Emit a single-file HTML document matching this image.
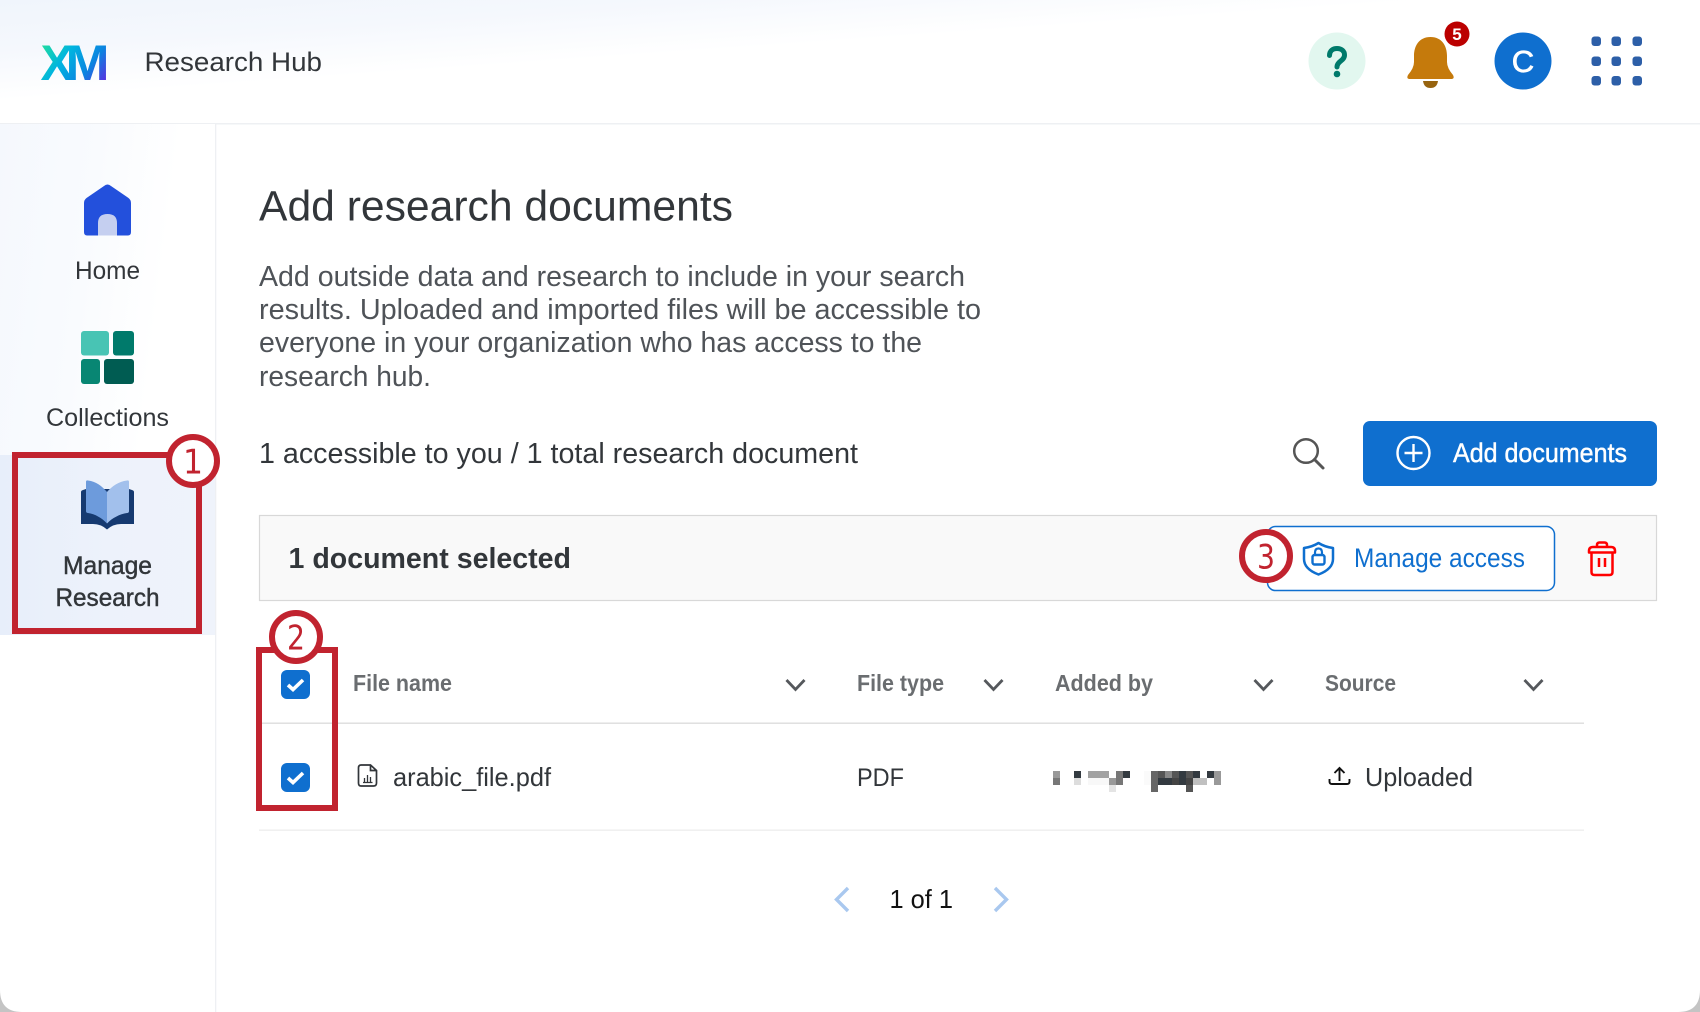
<!DOCTYPE html>
<html lang="en">
<head>
<meta charset="utf-8">
<title>Research Hub</title>
<style>
html,body{margin:0;padding:0;background:#fff;width:1700px;height:1012px;overflow:hidden}
svg{display:block}
text{font-family:"Liberation Sans",Arial,sans-serif}
.t{fill:#32363a}
.p{fill:#4f5358;font-size:29px}
.th{fill:#6a6d70;font-size:23px;font-weight:bold}
.med{stroke-width:.45px}
.num{fill:#c1232f;font-size:34px;font-family:"DejaVu Sans",sans-serif}
</style>
</head>
<body>
<svg width="1700" height="1012" viewBox="0 0 1700 1012" xmlns="http://www.w3.org/2000/svg">
<defs>
<linearGradient id="hd" gradientUnits="userSpaceOnUse" x1="0" y1="0" x2="7" y2="100">
<stop offset="0" stop-color="#f0f5fc"/><stop offset=".5" stop-color="#f5f8fd"/><stop offset="1" stop-color="#fff"/>
</linearGradient>
<linearGradient id="sb" x1="0" y1="0" x2="1" y2=".25">
<stop offset="0" stop-color="#f5f8fd"/><stop offset=".45" stop-color="#f9fbfe"/><stop offset=".8" stop-color="#fff"/>
</linearGradient>
<linearGradient id="sel" x1="0" y1="0" x2="1" y2="0">
<stop offset="0" stop-color="#e7eefa"/><stop offset=".5" stop-color="#edf2fb"/><stop offset="1" stop-color="#eff3fb"/>
</linearGradient>
<linearGradient id="xm" gradientUnits="userSpaceOnUse" x1="46" y1="40" x2="104" y2="84">
<stop offset="0" stop-color="#1fdca0"/><stop offset=".35" stop-color="#00b4e0"/><stop offset=".7" stop-color="#0b84e0"/><stop offset="1" stop-color="#5a2ee0"/>
</linearGradient>
</defs>

<rect width="1700" height="1012" fill="#fff"/>
<!-- header -->
<rect width="1700" height="123" fill="url(#hd)"/>
<rect x="0" y="123" width="1700" height="1.5" fill="#eef0f3"/>
<!-- sidebar -->
<rect x="0" y="124" width="215" height="420" fill="url(#sb)"/>
<rect x="215" y="124" width="1.3" height="888" fill="#eef0f3"/>
<rect x="0" y="455" width="215" height="180" fill="url(#sel)"/>

<!-- logo -->
<text x="40.5" y="80" font-size="50" font-weight="bold" fill="url(#xm)" textLength="33" lengthAdjust="spacingAndGlyphs">X</text>
<text x="65.5" y="80" font-size="50" font-weight="bold" fill="url(#xm)" textLength="44" lengthAdjust="spacingAndGlyphs">M</text>
<text x="144.5" y="71" font-size="27" class="t" textLength="177.5" lengthAdjust="spacingAndGlyphs">Research Hub</text>

<!-- help -->
<circle cx="1337" cy="61" r="28.5" fill="#e2f7ef"/>
<path d="M1329.5 55.5 C1329.5 50.5 1333 48.5 1337 48.5 C1341.5 48.5 1344.5 51 1344.5 55 C1344.5 61 1337 61 1337 67" fill="none" stroke="#007a6b" stroke-width="5" stroke-linecap="round"/>
<circle cx="1337" cy="74" r="3.3" fill="#007a6b"/>

<!-- bell -->
<path d="M1430.5 37 C1442 37 1447 46 1447 56 V62 Q1447 68 1453 75 Q1455 79 1451 79 H1410 Q1406 79 1408 75 Q1414 68 1414 62 V56 C1414 46 1419 37 1430.5 37 Z" fill="#c57a0c"/>
<path d="M1423 81 H1438 Q1437 88 1430.5 88 Q1424 88 1423 81 Z" fill="#97640f"/>
<circle cx="1457" cy="34" r="12.5" fill="#bb0000"/>
<text x="1457" y="40" font-size="17" font-weight="bold" fill="#fff" text-anchor="middle">5</text>

<!-- avatar -->
<circle cx="1523" cy="61" r="28.5" fill="#0f6fcf"/>
<text x="1523" y="72" font-size="31" fill="#fff" stroke="#fff" stroke-width=".7" text-anchor="middle">C</text>

<!-- apps -->
<g fill="#2d5fa8">
<rect x="1591.5" y="36.5" width="9.5" height="9.5" rx="3"/><rect x="1611.5" y="36.5" width="9.5" height="9.5" rx="3"/><rect x="1632.5" y="36.5" width="9.5" height="9.5" rx="3"/>
<rect x="1591.5" y="56.5" width="9.5" height="9.5" rx="3"/><rect x="1611.5" y="56.5" width="9.5" height="9.5" rx="3"/><rect x="1632.5" y="56.5" width="9.5" height="9.5" rx="3"/>
<rect x="1591.5" y="76" width="9.5" height="9.5" rx="3"/><rect x="1611.5" y="76" width="9.5" height="9.5" rx="3"/><rect x="1632.5" y="76" width="9.5" height="9.5" rx="3"/>
</g>

<!-- home -->
<path d="M104 186 Q107.5 183 111 186 L128.5 198 Q131 200 131 203 V232 Q131 235.5 128 235.5 H87 Q84 235.5 84 232 V203 Q84 200 86.5 198 Z" fill="#2350dc"/>
<path d="M98 235.5 V223 Q98 214 107.5 214 Q117 214 117 223 V235.5 Z" fill="#c5cff0"/>
<text x="75" y="279" font-size="25" class="t" textLength="65" lengthAdjust="spacingAndGlyphs">Home</text>

<!-- collections -->
<rect x="81" y="331" width="28" height="24.5" rx="3" fill="#48c4b4"/>
<rect x="113" y="331" width="21" height="24.5" rx="3" fill="#007a6b"/>
<rect x="81" y="359" width="19" height="25" rx="3" fill="#088673"/>
<rect x="104" y="359" width="30" height="25" rx="3" fill="#005c52"/>
<text x="46" y="426" font-size="25" class="t" textLength="123" lengthAdjust="spacingAndGlyphs">Collections</text>

<!-- manage research -->
<path d="M83 490 L86 489 H129 L132 490 Q134 490.5 134 492 V524 H121 Q113 524 107 529.5 Q101 524 93 524 H81 V492 Q81 490.5 83 490 Z" fill="#163a70"/>
<path d="M86 482 Q86 480 88 480.5 C96 481.5 102 486 107 492 V523.5 C102 518 95 514 88 513 Q86 513 86 511 Z" fill="#6d9bdc"/>
<path d="M129 482 Q129 480 127 480.5 C119 481.5 112 486 107 492 V523.5 C112 518 120 514 127 513 Q129 513 129 511 Z" fill="#a2c0ec"/>
<text x="63" y="574" font-size="25" class="t med" stroke="#32363a" textLength="89" lengthAdjust="spacingAndGlyphs">Manage</text>
<text x="55.5" y="606" font-size="25" class="t med" stroke="#32363a" textLength="104" lengthAdjust="spacingAndGlyphs">Research</text>

<!-- main copy -->
<text x="259" y="220.5" font-size="43" class="t" textLength="474" lengthAdjust="spacingAndGlyphs">Add research documents</text>
<text x="259" y="286" class="p" textLength="706" lengthAdjust="spacingAndGlyphs">Add outside data and research to include in your search</text>
<text x="259" y="319" class="p" textLength="722" lengthAdjust="spacingAndGlyphs">results. Uploaded and imported files will be accessible to</text>
<text x="259" y="352" class="p" textLength="663" lengthAdjust="spacingAndGlyphs">everyone in your organization who has access to the</text>
<text x="259" y="386" class="p" textLength="172" lengthAdjust="spacingAndGlyphs">research hub.</text>
<text x="259" y="463" font-size="29" class="t" textLength="599" lengthAdjust="spacingAndGlyphs">1 accessible to you / 1 total research document</text>

<!-- search -->
<circle cx="1306" cy="451" r="11.8" fill="none" stroke="#555" stroke-width="2.5"/>
<path d="M1314.5 459.5 L1323 468" stroke="#555" stroke-width="3" stroke-linecap="round"/>

<!-- add -->
<rect x="1363" y="421" width="294" height="65" rx="7" fill="#0f6fcf"/>
<circle cx="1413.5" cy="453" r="16" fill="none" stroke="#fff" stroke-width="2.4"/>
<path d="M1413.5 444 V462 M1404.5 453 H1422.5" stroke="#fff" stroke-width="2.4"/>
<text x="1453" y="462" font-size="26.5" fill="#fff" stroke="#fff" class="med" textLength="174" lengthAdjust="spacingAndGlyphs">Add documents</text>

<!-- selected bar -->
<rect x="259.5" y="515.5" width="1397" height="85" fill="#f9f9f9" stroke="#d8d8d8" stroke-width="1.2"/>
<text x="288.5" y="568" font-size="29" font-weight="bold" class="t" textLength="282.5" lengthAdjust="spacingAndGlyphs">1 document selected</text>
<rect x="1267.5" y="526.5" width="287" height="64" rx="8" fill="#fff" stroke="#0f6fcf" stroke-width="1.5"/>
<path d="M1304 548 Q1312 547 1318.5 543 Q1325 547 1333 548 V559 Q1333 569 1318.5 574.5 Q1304 569 1304 559 Z" fill="none" stroke="#0f6fcf" stroke-width="2.5" stroke-linejoin="round"/>
<rect x="1312.5" y="555" width="12" height="9.5" rx="2" fill="none" stroke="#0f6fcf" stroke-width="2.4"/>
<path d="M1315 555 V552.5 Q1315 548.5 1318.5 548.5 Q1322 548.5 1322 552.5 V555" fill="none" stroke="#0f6fcf" stroke-width="2.2"/>
<text x="1354" y="567" font-size="26.5" fill="#0f6fcf" textLength="171" lengthAdjust="spacingAndGlyphs">Manage access</text>

<!-- trash -->
<path d="M1589 551 Q1589 547 1593 547 H1611 Q1615 547 1615 551 V552.5 H1589 Z M1597 547 V545 Q1597 542.5 1599.5 542.5 H1604.5 Q1607 542.5 1607 545 V547 M1591.5 552.5 V572 Q1591.5 575 1594.5 575 H1609.5 Q1612.5 575 1612.5 572 V552.5 M1599 558 V567 M1605 558 V567" fill="none" stroke="#f00" stroke-width="2.5" stroke-linejoin="round"/>

<!-- table headers -->
<text x="353" y="691" class="th" textLength="99" lengthAdjust="spacingAndGlyphs">File name</text>
<text x="857" y="691" class="th" textLength="87" lengthAdjust="spacingAndGlyphs">File type</text>
<text x="1055" y="691" class="th" textLength="98" lengthAdjust="spacingAndGlyphs">Added by</text>
<text x="1325" y="691" class="th" textLength="71" lengthAdjust="spacingAndGlyphs">Source</text>
<g fill="none" stroke="#55585c" stroke-width="2.8">
<path d="M786.5 680 L795.5 689.5 L804.5 680"/>
<path d="M984.5 680 L993.5 689.5 L1002.5 680"/>
<path d="M1254.5 680 L1263.5 689.5 L1272.5 680"/>
<path d="M1524.5 680 L1533.5 689.5 L1542.5 680"/>
</g>
<rect x="259" y="722.5" width="1325" height="1.4" fill="#dcdcdc"/>
<rect x="259" y="829.5" width="1325" height="1.3" fill="#ececec"/>

<!-- checkboxes -->
<rect x="281" y="670" width="29" height="29" rx="6" fill="#0f6fcf"/>
<path d="M288 685 L293 689.5 L303 680" fill="none" stroke="#fff" stroke-width="3.6"/>
<rect x="281" y="763" width="29" height="29" rx="6" fill="#0f6fcf"/>
<path d="M288 778 L293 782.5 L303 773" fill="none" stroke="#fff" stroke-width="3.6"/>

<!-- row -->
<path d="M361 765 H370.5 L376.5 770.5 V783 Q376.5 786 373.5 786 H361 Q358.5 786 358.5 783 V768 Q358.5 765 361 765 Z M370.5 765 V770.5 H376.5" fill="none" stroke="#32363a" stroke-width="1.7"/>
<path d="M363 782.5 H372.5 M364.5 782 V778 M367.5 782 V775 M370.5 782 V777" fill="none" stroke="#32363a" stroke-width="1.3"/>
<text x="393" y="786" font-size="26" class="t" textLength="158" lengthAdjust="spacingAndGlyphs">arabic_file.pdf</text>
<text x="857" y="786" font-size="25" class="t" textLength="47" lengthAdjust="spacingAndGlyphs">PDF</text>

<!-- pixelated name -->
<g shape-rendering="crispEdges">
<rect x="1053" y="771" width="7" height="7" fill="#999"/>
<rect x="1053" y="778" width="7" height="7" fill="#777"/>
<rect x="1074" y="771" width="7" height="7" fill="#333a40"/>
<rect x="1074" y="778" width="7" height="7" fill="#ddd"/>
<rect x="1088" y="771" width="21" height="7" fill="#a2a2a2"/>
<rect x="1088" y="778" width="21" height="7" fill="#f8f8f8"/>
<rect x="1109" y="778" width="7" height="7" fill="#999"/>
<rect x="1109" y="785" width="7" height="7" fill="#e4e4e4"/>
<rect x="1116" y="771" width="7" height="7" fill="#777"/>
<rect x="1116" y="778" width="7" height="7" fill="#777"/>
<rect x="1123" y="771" width="7" height="7" fill="#333a40"/>
<rect x="1144" y="771" width="7" height="14" fill="#fafafa"/>
<rect x="1151" y="771" width="7" height="7" fill="#666"/>
<rect x="1151" y="778" width="7" height="7" fill="#666"/>
<rect x="1151" y="785" width="7" height="7" fill="#666"/>
<rect x="1158" y="771" width="7" height="7" fill="#555"/>
<rect x="1165" y="771" width="7" height="7" fill="#888"/>
<rect x="1172" y="771" width="7" height="7" fill="#555"/>
<rect x="1179" y="771" width="7" height="7" fill="#333a40"/>
<rect x="1186" y="771" width="7" height="7" fill="#555"/>
<rect x="1193" y="771" width="7" height="7" fill="#333a40"/>
<rect x="1207" y="771" width="7" height="7" fill="#333a40"/>
<rect x="1214" y="771" width="7" height="7" fill="#999"/>
<rect x="1158" y="778" width="14" height="7" fill="#333a40"/>
<rect x="1172" y="778" width="7" height="7" fill="#444"/>
<rect x="1179" y="778" width="7" height="7" fill="#333a40"/>
<rect x="1186" y="778" width="7" height="7" fill="#444"/>
<rect x="1193" y="778" width="14" height="7" fill="#c0c0c0"/>
<rect x="1214" y="778" width="7" height="7" fill="#999"/>
<rect x="1186" y="785" width="7" height="7" fill="#555"/>
</g>

<!-- upload -->
<path d="M1339.5 781 V769 M1334.5 773 L1339.5 768 L1344.5 773 M1329.5 779 V781.5 Q1329.5 784 1332 784 H1347 Q1349.5 784 1349.5 781.5 V779" fill="none" stroke="#111" stroke-width="1.9"/>
<text x="1365" y="786" font-size="26" class="t" textLength="108" lengthAdjust="spacingAndGlyphs">Uploaded</text>

<!-- pagination -->
<path d="M848 888 L836.5 899.5 L848 911" fill="none" stroke="#a9c8ef" stroke-width="3.4"/>
<path d="M995 888 L1006.5 899.5 L995 911" fill="none" stroke="#a9c8ef" stroke-width="3.4"/>
<text x="889.5" y="908" font-size="26" fill="#111" textLength="63.5" lengthAdjust="spacingAndGlyphs">1 of 1</text>

<!-- annotations -->
<rect x="15" y="455" width="184" height="176" fill="none" stroke="#c1232f" stroke-width="6"/>
<circle cx="193" cy="461" r="24" fill="#fff" stroke="#c1232f" stroke-width="6"/>
<text x="183" y="473.5" class="num" textLength="20" lengthAdjust="spacingAndGlyphs">1</text>

<rect x="259" y="650" width="76" height="158" fill="none" stroke="#c1232f" stroke-width="6"/>
<circle cx="296" cy="637" r="24" fill="#fff" stroke="#c1232f" stroke-width="6"/>
<text x="287" y="649.5" class="num" textLength="18" lengthAdjust="spacingAndGlyphs">2</text>

<circle cx="1266" cy="556" r="24" fill="#fff" stroke="#c1232f" stroke-width="6"/>
<text x="1257" y="568.5" class="num" textLength="18" lengthAdjust="spacingAndGlyphs">3</text>

<!-- rounded window corners -->
<path d="M0 990 Q0 1012 22 1012 H0 Z" fill="#c4c4c4"/>
<path d="M1700 990 Q1700 1012 1678 1012 H1700 Z" fill="#c4c4c4"/>
</svg>
</body>
</html>
